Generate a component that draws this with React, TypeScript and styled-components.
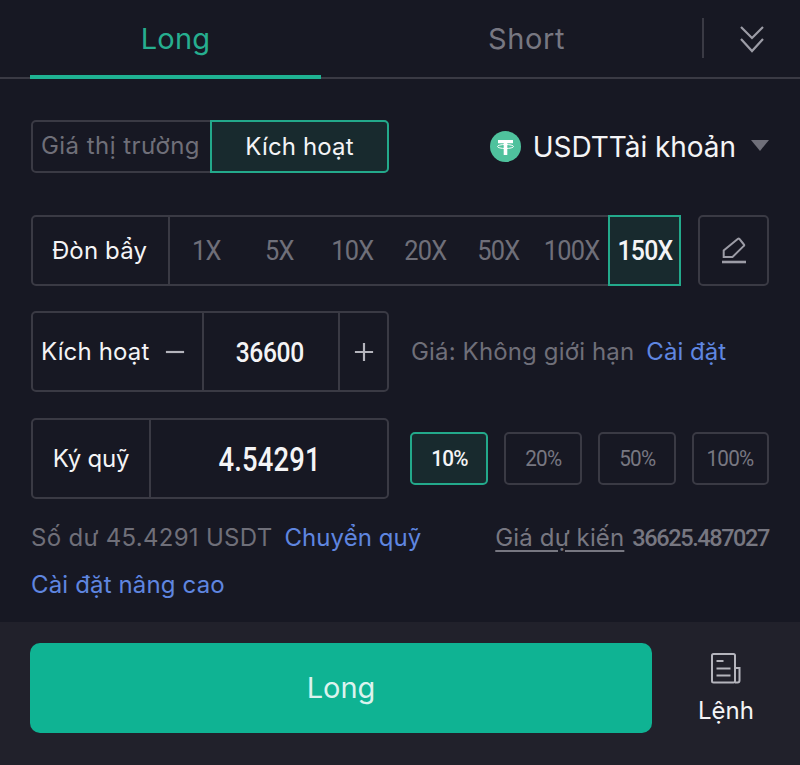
import styled, { createGlobalStyle } from 'styled-components';

const leverages = ['1X', '5X', '10X', '20X', '50X', '100X', '150X'];
const percents = ['10%', '20%', '50%', '100%'];

const App = () => {
    return (
        <Page>
            <GlobalStyle />
            <Tabs>
                <LongTab>Long</LongTab>
                <ShortTab>Short</ShortTab>
                <TabDivider />
                <CollapseButton>
                    <svg width="26" height="28" viewBox="0 0 26 28" fill="none" stroke="#9c9ca6" strokeWidth="2.2">
                        <path d="M2 2l11 11L24 2" />
                        <path d="M2 14l11 12 11-12" />
                    </svg>
                </CollapseButton>
            </Tabs>
            <Body>
                <OrderRow>
                    <Segment>
                        <SegmentItem>Giá thị trường</SegmentItem>
                        <SegmentActive>Kích hoạt</SegmentActive>
                    </Segment>
                    <Account>
                        <svg width="31" height="31" viewBox="0 0 31 31">
                            <circle cx="15.5" cy="15.5" r="15.5" fill="#4fc29d" />
                            <path d="M8 9h15v3.200h-5.700V24h-3.600V12.200H8z" fill="#fff" />
                            <ellipse cx="15.5" cy="15.5" rx="8" ry="2" fill="none" stroke="#fff" strokeWidth="1" />
                        </svg>
                        <AccountName>USDTTài khoản</AccountName>
                        <Caret />
                    </Account>
                </OrderRow>
                <LeverageRow>
                    <LeverageGroup>
                        <LeverageLabel>Đòn bẩy</LeverageLabel>
                        <LeverageList>
                            {leverages.map((item) => (
                                <LeverageItem key={item} $active={item === '150X'}>
                                    <Num $scale={item === '150X' ? 0.92 : 0.94}>{item}</Num>
                                </LeverageItem>
                            ))}
                        </LeverageList>
                    </LeverageGroup>
                    <EditButton>
                        <svg width="26" height="27" viewBox="0 0 26 27" fill="none" stroke="#9c9ca6" strokeWidth="2">
                            <path d="M2.700 20v-6.500L17 1.800a1 1 0 0 1 1.400.1l4.500 5.600a1 1 0 0 1-.1 1.400L11.500 20z" />
                            <path d="M1 25h24" strokeWidth="2.600" />
                        </svg>
                    </EditButton>
                </LeverageRow>
                <TriggerRow>
                    <TriggerBox>
                        <TriggerLabel>
                            Kích hoạt
                            <StepIcon viewBox="0 0 22 22"><path d="M1 11h20" /></StepIcon>
                        </TriggerLabel>
                        <TriggerValue><Num $scale={0.88}>36600</Num></TriggerValue>
                        <PlusCell>
                            <StepIcon viewBox="0 0 22 22"><path d="M1 11h20M11 1v20" /></StepIcon>
                        </PlusCell>
                    </TriggerBox>
                    <PriceNote>
                        Giá: Không giới hạn
                        <BlueLink>Cài đặt</BlueLink>
                    </PriceNote>
                </TriggerRow>
                <MarginRow>
                    <MarginBox>
                        <MarginLabel>Ký quỹ</MarginLabel>
                        <MarginValue><Num $scale={0.83}>4.54291</Num></MarginValue>
                    </MarginBox>
                    <PercentList>
                        {percents.map((item) => (
                            <PercentButton key={item} $active={item === '10%'}>
                                <Num $scale={0.94}>{item}</Num>
                            </PercentButton>
                        ))}
                    </PercentList>
                </MarginRow>
                <BalanceRow>
                    <Balance>
                        Số dư 45.4291 USDT
                        <BlueLink>Chuyển quỹ</BlueLink>
                    </Balance>
                    <Estimate>
                        <EstimateLabel>Giá dự kiến</EstimateLabel>
                        <EstimateValue>36625.487027</EstimateValue>
                    </Estimate>
                </BalanceRow>
                <AdvancedLink>Cài đặt nâng cao</AdvancedLink>
            </Body>
            <Footer>
                <SubmitButton>Long</SubmitButton>
                <OrdersLink>
                    <svg width="32" height="32" viewBox="0 0 32 32" fill="none" stroke="#b4b4bc" strokeWidth="2">
                        <rect x="2" y="2" width="23" height="28.500" rx="1.500" />
                        <path d="M25 16h4.500v12.500a2 2 0 0 1-2 2H25" />
                        <path d="M6.500 9h7M6.500 16.500h14M6.500 23.500h14" />
                    </svg>
                    <OrdersText>Lệnh</OrdersText>
                </OrdersLink>
            </Footer>
        </Page>
    );
};

export default App;

const GlobalStyle = createGlobalStyle`
  html, body {
    margin: 0;
    padding: 0;
    background: #171823;
  }
  * {
    box-sizing: border-box;
  }
`;

const Page = styled.div`
  width: 800px;
  height: 765px;
  display: flex;
  flex-direction: column;
  overflow: hidden;
  background: #171823;
  font-family: Inter, "Noto Sans", sans-serif;
  color: #f4f4f6;
`;

const Tabs = styled.div`
  height: 79px;
  display: flex;
  align-items: flex-start;
  padding-left: 30px;
  border-bottom: 2px solid #3a3a44;
`;

const LongTab = styled.div`
  width: 291px;
  height: 79px;
  padding-top: 18px;
  text-align: center;
  font-size: 29px;
  line-height: 42px;
  letter-spacing: 0.2px;
  color: #26ae8f;
  border-bottom: 4px solid #1fb393;
`;

const ShortTab = styled.div`
  width: 381px;
  padding: 18px 0 0 30px;
  text-align: center;
  font-size: 29px;
  line-height: 42px;
  letter-spacing: 0.6px;
  color: #777781;
`;

const TabDivider = styled.div`
  width: 2px;
  height: 40px;
  margin-top: 18px;
  background: #3a3a44;
`;

const CollapseButton = styled.div`
  margin: 25px 0 0 35px;
  display: flex;
`;

const Body = styled.div`
  flex: 1;
  padding: 41px 31px 0;
  display: flex;
  flex-direction: column;
  font-size: 24px;
  letter-spacing: 0.15px;
`;

// digits in the picture are a condensed face, none is installed
const Num = styled.span<{ $scale: number }>`
  display: inline-block;
  font-family: Roboto, sans-serif;
  transform: scaleX(${(p) => p.$scale});
`;

const OrderRow = styled.div`
  height: 53px;
  display: flex;
  justify-content: space-between;
  align-items: center;
`;

const Segment = styled.div`
  width: 358px;
  height: 53px;
  display: flex;
  border: 2px solid #3a3a44;
  border-radius: 5px;
`;

const SegmentItem = styled.div`
  width: 178px;
  padding-left: 8px;
  line-height: 48px;
  letter-spacing: 0.45px;
  white-space: nowrap;
  color: #6f6f79;
`;

const SegmentActive = styled.div`
  width: 180px;
  height: 53px;
  margin: -2px -2px 0 0;
  border: 2px solid #23a98b;
  border-radius: 0 5px 5px 0;
  background: #182a2e;
  line-height: 49px;
  text-align: center;
`;

const Account = styled.div`
  display: flex;
  align-items: center;
`;

const AccountName = styled.div`
  margin: 0 15px 0 12px;
  font-size: 28px;
  line-height: 40px;
  letter-spacing: -0.05px;
  white-space: nowrap;
`;

const Caret = styled.div`
  width: 0;
  height: 0;
  margin-top: -2px;
  border-left: 9px solid transparent;
  border-right: 9px solid transparent;
  border-top: 11px solid #6f6f79;
`;

const LeverageRow = styled.div`
  height: 71px;
  margin-top: 42px;
  display: flex;
  justify-content: space-between;
`;

const LeverageGroup = styled.div`
  width: 650px;
  display: flex;
  border: 2px solid #3a3a44;
  border-radius: 5px 0 0 5px;
`;

const LeverageLabel = styled.div`
  flex: none;
  width: 137px;
  padding-right: 2px;
  border-right: 2px solid #3a3a44;
  line-height: 67px;
  text-align: center;
`;

const LeverageList = styled.div`
  flex: 1;
  display: grid;
  grid-template-columns: repeat(6, 73px) 71px;
`;

const LeverageItem = styled.div<{ $active?: boolean }>`
  height: 71px;
  margin-top: -2px;
  font-weight: ${(p) => (p.$active ? 500 : 400)};
  font-size: 27px;
  line-height: 67px;
  letter-spacing: -0.8px;
  text-align: center;
  white-space: nowrap;
  color: ${(p) => (p.$active ? '#f4f4f6' : '#6f6f79')};
  border: 2px solid ${(p) => (p.$active ? '#23a98b' : 'transparent')};
  background: ${(p) => (p.$active ? '#182a2e' : 'transparent')};
  margin-right: ${(p) => (p.$active ? '-2px' : '0')};
`;

const EditButton = styled.div`
  width: 71px;
  display: flex;
  align-items: center;
  justify-content: center;
  border: 2px solid #3a3a44;
  border-radius: 5px;
`;

const TriggerRow = styled.div`
  height: 81px;
  margin-top: 25px;
  display: flex;
  align-items: center;
`;

const TriggerBox = styled.div`
  flex: none;
  width: 358px;
  height: 81px;
  display: flex;
  border: 2px solid #3a3a44;
  border-radius: 5px;
`;

const TriggerLabel = styled.div`
  width: 171px;
  padding: 0 17px 0 8px;
  display: flex;
  align-items: center;
  justify-content: space-between;
  border-right: 2px solid #3a3a44;
  white-space: nowrap;
`;

const StepIcon = styled.svg`
  width: 20px;
  height: 20px;
  fill: none;
  stroke: #b4b4bc;
  stroke-width: 2.400;
`;

const TriggerValue = styled.div`
  width: 136px;
  padding-right: 2px;
  border-right: 2px solid #3a3a44;
  font-weight: 500;
  font-size: 28px;
  line-height: 78px;
  letter-spacing: -0.4px;
  text-align: center;
`;

const PlusCell = styled.div`
  flex: 1;
  display: flex;
  align-items: center;
  justify-content: center;
`;

const PriceNote = styled.div`
  margin-left: 22px;
  white-space: nowrap;
  color: #6f6f79;
`;

const BlueLink = styled.span`
  margin-left: 12px;
  letter-spacing: 0.05px;
  color: #5f86e0;
`;

const MarginRow = styled.div`
  height: 81px;
  margin-top: 26px;
  display: flex;
  align-items: center;
`;

const MarginBox = styled.div`
  flex: none;
  width: 358px;
  height: 81px;
  display: flex;
  border: 2px solid #3a3a44;
  border-radius: 5px;
`;

const MarginLabel = styled.div`
  width: 118px;
  border-right: 2px solid #3a3a44;
  line-height: 77px;
  letter-spacing: -0.2px;
  text-align: center;
`;

const MarginValue = styled.div`
  flex: 1;
  padding-left: 2px;
  font-weight: 500;
  font-size: 33px;
  line-height: 78px;
  letter-spacing: 0.2px;
  text-align: center;
`;

const PercentList = styled.div`
  margin-left: 21px;
  display: grid;
  grid-template-columns: repeat(3, 78px) 77px;
  gap: 16px;
`;

const PercentButton = styled.div<{ $active?: boolean }>`
  height: 53px;
  border: 2px solid ${(p) => (p.$active ? '#23a98b' : '#3a3a44')};
  border-radius: 5px;
  background: ${(p) => (p.$active ? '#182a2e' : 'transparent')};
  color: ${(p) => (p.$active ? '#f4f4f6' : '#777781')};
  font-weight: ${(p) => (p.$active ? 500 : 400)};
  font-size: 22px;
  line-height: 49px;
  letter-spacing: -0.8px;
  text-align: center;
`;

const BalanceRow = styled.div`
  margin-top: 22px;
  display: flex;
  justify-content: space-between;
  align-items: center;
`;

const Balance = styled.div`
  line-height: 34px;
  letter-spacing: 0.3px;
  white-space: nowrap;
  color: #6f6f79;
`;

const Estimate = styled.div`
  display: flex;
  align-items: center;
  white-space: nowrap;
`;

const EstimateLabel = styled.span`
  line-height: 34px;
  letter-spacing: 0.15px;
  color: #777781;
  text-decoration: underline;
  text-underline-offset: 4px;
`;

const EstimateValue = styled.span`
  margin-left: 8px;
  font-family: Roboto, sans-serif;
  font-weight: 500;
  font-size: 23.5px;
  letter-spacing: -1.4px;
  color: #777781;
`;

const AdvancedLink = styled.div`
  margin-top: 13px;
  line-height: 34px;
  color: #5f86e0;
`;

const Footer = styled.div`
  height: 143px;
  padding: 21px 0 0 30px;
  display: flex;
  background: #21212b;
`;

const SubmitButton = styled.div`
  width: 622px;
  height: 90px;
  border-radius: 10px;
  background: #0fb393;
  font-size: 29px;
  line-height: 90px;
  text-align: center;
  color: #dcf3ee;
`;

const OrdersLink = styled.div`
  width: 148px;
  padding-top: 9px;
  display: flex;
  flex-direction: column;
  align-items: center;
`;

const OrdersText = styled.div`
  margin-top: 10px;
  font-size: 24px;
  line-height: 34px;
`;
